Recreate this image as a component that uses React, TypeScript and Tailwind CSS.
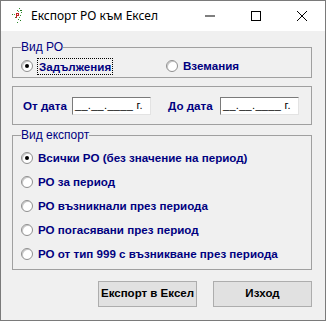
import React from 'react';

// Radio button in the classic Windows look
const Radio = ({ checked }: { checked?: boolean }) => (
  <span className="w-[12px] h-[12px] shrink-0 rounded-full border border-[#8f8f8f] bg-white flex items-center justify-center shadow-[inset_1px_1px_0_#c8c8c8]">
    {checked && <span className="w-[4px] h-[4px] rounded-full bg-black" />}
  </span>
);

const DateBox = () => (
  <div className="w-[79px] h-[18px] bg-white border border-t-[#7a7a7a] border-l-[#7a7a7a] border-r-[#e3e3e3] border-b-[#e3e3e3] flex items-center pl-[2px] text-[11px] font-normal text-black tracking-[0.3px] whitespace-nowrap overflow-hidden">
    __.__.____ г.
  </div>
);

const AppIcon = () => (
  <svg width="11" height="16" viewBox="0 0 11 16" className="shrink-0">
    <rect x="7" y="0" width="1" height="1" fill="#2e8b2e" />
    <rect x="5" y="2" width="1" height="1" fill="#2e8b2e" />
    <rect x="8" y="2" width="2" height="1" fill="#1f7a1f" />
    <rect x="6" y="3" width="1" height="1" fill="#5aa85a" />
    <rect x="9" y="4" width="1" height="1" fill="#2e8b2e" />
    <rect x="0" y="6" width="1" height="1" fill="#2e8b2e" />
    <rect x="2" y="6" width="1" height="1" fill="#5aa85a" />
    <rect x="4" y="5" width="3" height="1" fill="#c02020" />
    <rect x="4" y="6" width="1" height="4" fill="#c02020" />
    <rect x="6" y="6" width="1" height="1" fill="#c02020" />
    <rect x="5" y="7" width="2" height="1" fill="#c02020" />
    <rect x="8" y="7" width="1" height="1" fill="#2e8b2e" />
    <rect x="3" y="9" width="1" height="1" fill="#2e8b2e" />
    <rect x="7" y="9" width="1" height="1" fill="#5aa85a" />
    <rect x="6" y="11" width="1" height="1" fill="#2e8b2e" />
    <rect x="8" y="12" width="1" height="1" fill="#1f7a1f" />
    <rect x="5" y="14" width="1" height="1" fill="#2e8b2e" />
  </svg>
);

const exportOptions = [
  'Всички РО (без значение на период)',
  'РО за период',
  'РО възникнали през периода',
  'РО погасявани през период',
  'РО от тип 999 с възникване през периода',
];

export default function App() {
  return (
    <div className="w-[326px] h-[321px] border border-[#7a7a7a] flex flex-col bg-white font-['Liberation_Sans',Arial,sans-serif]">
      {/* Title bar */}
      <div className="h-[30px] flex items-center shrink-0">
        <div className="pl-[11px] pr-[8px] flex items-center">
          <AppIcon />
        </div>
        <span className="text-[12px] text-black font-['Noto_Sans',sans-serif]">Експорт РО към Ексел</span>
        <div className="ml-auto flex h-full">
          <div className="w-[46px] h-full flex items-center justify-center">
            <svg width="10" height="10" viewBox="0 0 10 10">
              <rect x="0" y="4.5" width="10" height="1" fill="#000" />
            </svg>
          </div>
          <div className="w-[46px] h-full flex items-center justify-center">
            <svg width="10" height="10" viewBox="0 0 10 10">
              <rect x="0.5" y="0.5" width="9" height="9" fill="none" stroke="#000" strokeWidth="1" />
            </svg>
          </div>
          <div className="w-[46px] h-full flex items-center justify-center">
            <svg width="10" height="10" viewBox="0 0 10 10">
              <path d="M0 0 L10 10 M10 0 L0 10" stroke="#000" strokeWidth="1" />
            </svg>
          </div>
        </div>
      </div>

      {/* Body */}
      <div className="flex-1 bg-[#f0f0f0] pl-[11px] pr-[13px] pt-[10px] text-[11.6px] text-[#000080] font-bold">
        {/* Вид РО */}
        <fieldset className="border border-[#a0a0a0] px-[8px] pt-[4px] pb-[3px]">
          <legend className="px-0 leading-[13px] font-normal text-[12px]">Вид РО</legend>
          <div className="flex h-[16px] items-center">
            <div className="w-[145px] flex items-center gap-[4px]">
              <Radio checked />
              <span className="border border-dotted border-black px-[1px] leading-[15px]">Задължения</span>
            </div>
            <div className="flex items-center gap-[5px]">
              <Radio />
              <span>Вземания</span>
            </div>
          </div>
        </fieldset>

        {/* Period */}
        <div className="mt-[8px] h-[39px] border border-[#a0a0a0] flex items-center pl-[10px]">
          <span className="w-[49px]">От дата</span>
          <DateBox />
          <span className="ml-[17px] w-[52px]">До дата</span>
          <DateBox />
        </div>

        {/* Вид експорт */}
        <fieldset className="mt-[4px] border border-[#a0a0a0] px-[8px] pt-[4px] pb-[3px]">
          <legend className="px-0 leading-[13px] font-normal text-[12px]">Вид експорт</legend>
          {exportOptions.map((label, index) => (
            <div key={index} className="h-[24px] flex items-center gap-[5px]">
              <Radio checked={index === 0} />
              <span>{label}</span>
            </div>
          ))}
        </fieldset>

        {/* Buttons */}
        <div className="mt-[11px] flex justify-end gap-[16px] text-black text-[11.5px]">
          <button className="w-[99px] h-[26px] bg-[#e1e1e1] border border-[#adadad] font-bold">Експорт в Ексел</button>
          <button className="w-[99px] h-[26px] bg-[#e1e1e1] border border-[#adadad] font-bold">Изход</button>
        </div>
      </div>
    </div>
  );
}
